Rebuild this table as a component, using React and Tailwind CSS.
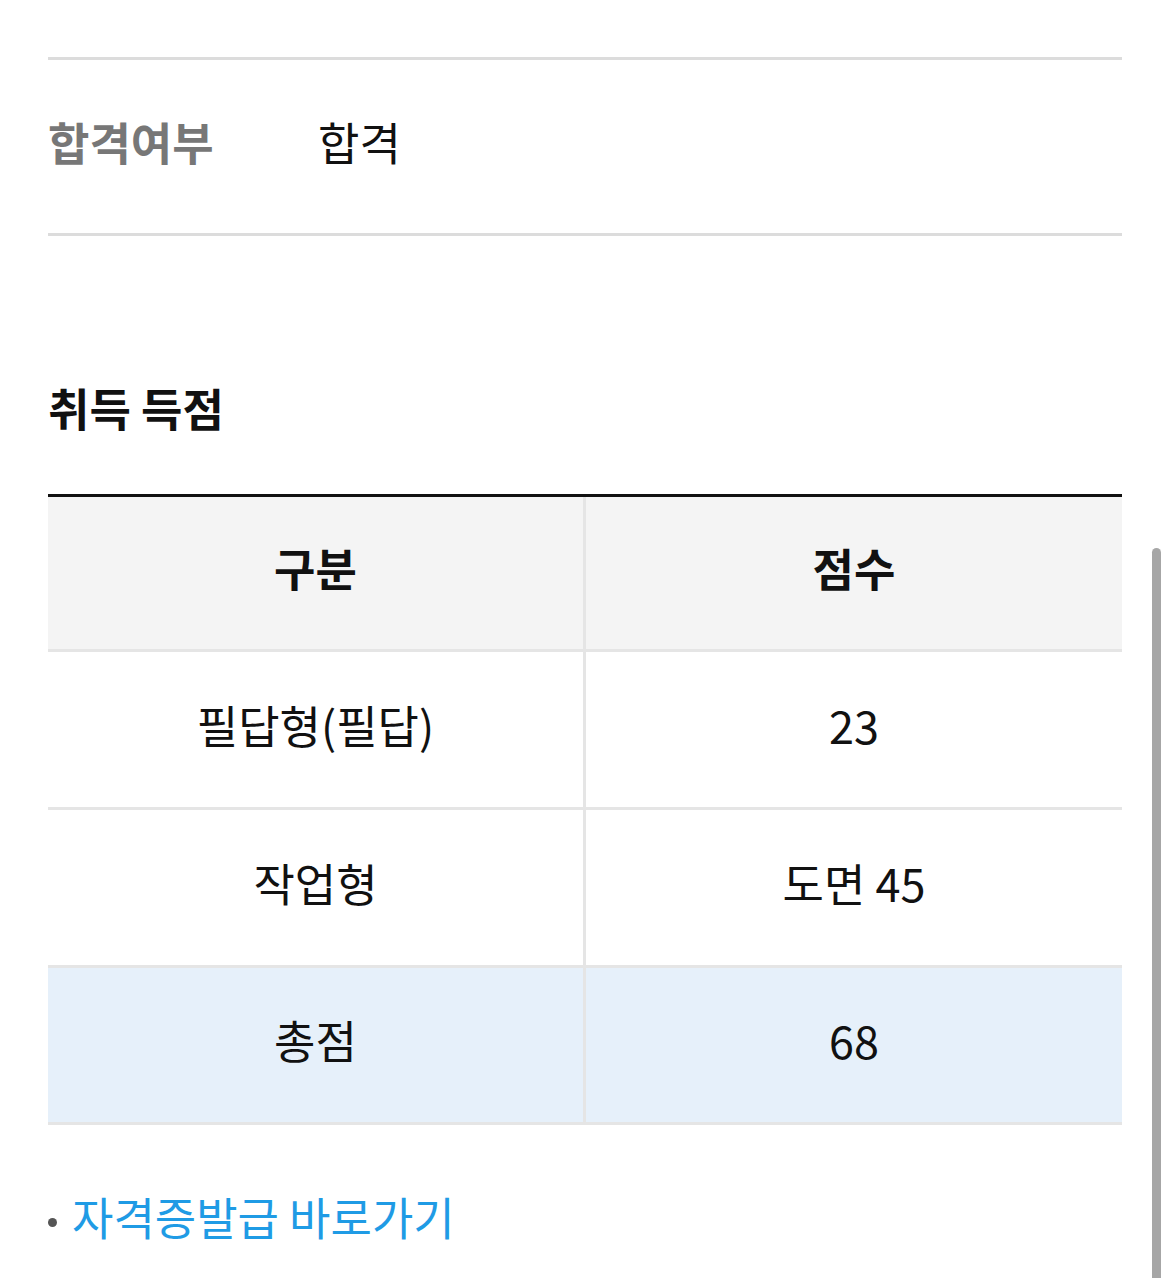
export default function App() {
  const font = { fontFamily: '"Noto Sans CJK KR", "Noto Sans", sans-serif' };

  const rows = [
    { label: "필답형(필답)", value: "23" },
    { label: "작업형", value: "도면 45" },
  ];

  const cell = "flex items-center justify-center pb-[10px] text-[45px]";
  const grid = "grid grid-cols-[538px_1fr]";

  return (
    <div
      className="relative w-[1170px] h-[1278px] overflow-hidden bg-white text-[#111]"
      style={font}
    >
      <div className="px-12 pt-[57px]">
        {/* RESULT */}
        <div className="border-t-[3px] border-b-[3px] border-[#dcdcdc] h-[179px] flex items-center pb-[10px]">
          <span className="w-[270px] text-[45px] font-bold text-[#777777] leading-none">
            합격여부
          </span>
          <span className="text-[45px] leading-none">합격</span>
        </div>

        {/* SCORE */}
        <h2 className="mt-[146px] h-[60px] flex items-center pb-[10px] text-[45px] font-bold leading-none">
          취득 득점
        </h2>

        <div className="mt-[52px] border-t-[3px] border-[#111]">
          <div className={`${grid} h-[155px] bg-[#f4f4f4] border-b-[3px] border-[#e5e5e5]`}>
            <div className={`${cell} border-r-[3px] border-[#e5e5e5] font-bold`}>
              구분
            </div>
            <div className={`${cell} font-bold`}>점수</div>
          </div>

          {rows.map((r) => (
            <div
              key={r.label}
              className={`${grid} h-[158px] border-b-[3px] border-[#e5e5e5]`}
            >
              <div className={`${cell} border-r-[3px] border-[#e5e5e5]`}>
                {r.label}
              </div>
              <div className={cell}>{r.value}</div>
            </div>
          ))}

          <div className={`${grid} h-[157px] bg-[#e6f0fa] border-b-[3px] border-[#e5e5e5]`}>
            <div className={`${cell} border-r-[3px] border-[#e5e5e5]`}>총점</div>
            <div className={cell}>68</div>
          </div>
        </div>

        {/* LINK */}
        <div className="mt-[66px] flex items-center h-[60px] pb-[10px]">
          <span className="w-[9px] h-[9px] rounded-full bg-[#555] mt-3 mr-[15px]" />
          <a className="text-[45px] leading-none text-[#1f9be5]">자격증발급 바로가기</a>
        </div>
      </div>

      {/* scrollbar */}
      <div className="absolute left-[1152px] top-[548px] w-[9px] h-[740px] rounded-full bg-[#a6a6a6]" />
    </div>
  );
}
